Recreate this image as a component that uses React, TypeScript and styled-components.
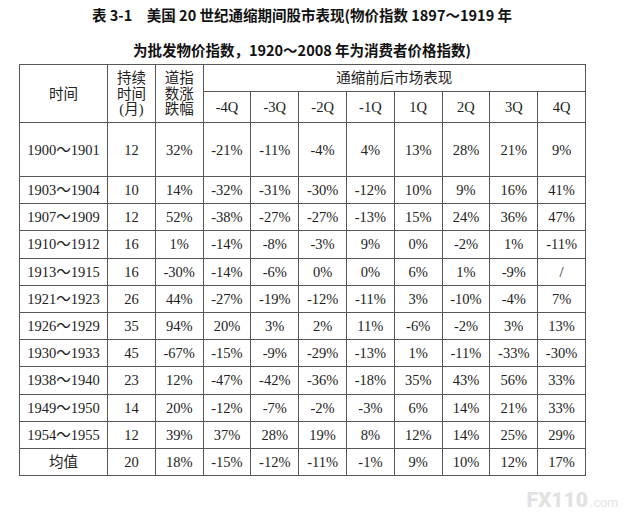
import React from 'react'
import styled, { createGlobalStyle } from 'styled-components'

const GlobalStyle = createGlobalStyle`
  html, body {
    margin: 0;
    padding: 0;
    background: #fff;
  }
`

const Page = styled.div`
  width: 631px;
  height: 524px;
  padding: 5px 0 0 19px;
  box-sizing: border-box;
  display: flex;
  flex-direction: column;
  background: #fff;
`

const Caption = styled.div`
  width: 566px;
  display: flex;
  flex-direction: column;
  align-items: center;
  gap: 15px;
  margin-bottom: 4px;
`

const TitleLine = styled.div`
  font-family: 'Noto Sans CJK SC', 'Liberation Sans', sans-serif;
  font-weight: 700;
  font-size: 14.5px;
  line-height: 20px;
  color: #111;
  white-space: pre;
`

const Table = styled.table`
  width: 566px;
  table-layout: fixed;
  border-collapse: collapse;
  font-family: 'Liberation Serif', 'Noto Sans CJK SC', serif;
  font-size: 14.5px;
  color: #222;
`

const Col = styled.col<{ $w: number }>`
  width: ${({ $w }) => $w}px;
`

const Row = styled.tr<{ $h: number }>`
  height: ${({ $h }) => $h}px;
`

const Cell = styled.td`
  border: 1px solid #575757;
  padding: 0;
  text-align: center;
  vertical-align: middle;
  line-height: 16px;
  white-space: nowrap;
`

// stacked header labels wrap onto three short lines
const HeadCell = styled(Cell).attrs({ as: 'th' })<{ $stack?: boolean }>`
  font-weight: 400;
  font-size: 14.5px;
  line-height: ${({ $stack }) => ($stack ? '15.5px' : '16px')};
  padding-top: ${({ $stack }) => ($stack ? '2px' : '0')};
`

const Footer = styled.div`
  display: flex;
  justify-content: flex-end;
  align-items: baseline;
  gap: 2px;
  width: 599px;
  margin-top: 15px;
`

const LogoMark = styled.span`
  font-family: Roboto, 'Liberation Sans', sans-serif;
  font-weight: 900;
  font-size: 21px;
  line-height: 18px;
  color: #e2e2e2;
`

const LogoTld = styled.span`
  font-family: 'Liberation Sans', sans-serif;
  font-size: 13px;
  color: #e4e4e4;
`

const quarters = ['-4Q', '-3Q', '-2Q', '-1Q', '1Q', '2Q', '3Q', '4Q']

const rows: string[][] = [
  ['1900～1901', '12', '32%', '-21%', '-11%', '-4%', '4%', '13%', '28%', '21%', '9%'],
  ['1903～1904', '10', '14%', '-32%', '-31%', '-30%', '-12%', '10%', '9%', '16%', '41%'],
  ['1907～1909', '12', '52%', '-38%', '-27%', '-27%', '-13%', '15%', '24%', '36%', '47%'],
  ['1910～1912', '16', '1%', '-14%', '-8%', '-3%', '9%', '0%', '-2%', '1%', '-11%'],
  ['1913～1915', '16', '-30%', '-14%', '-6%', '0%', '0%', '6%', '1%', '-9%', '/'],
  ['1921～1923', '26', '44%', '-27%', '-19%', '-12%', '-11%', '3%', '-10%', '-4%', '7%'],
  ['1926～1929', '35', '94%', '20%', '3%', '2%', '11%', '-6%', '-2%', '3%', '13%'],
  ['1930～1933', '45', '-67%', '-15%', '-9%', '-29%', '-13%', '1%', '-11%', '-33%', '-30%'],
  ['1938～1940', '23', '12%', '-47%', '-42%', '-36%', '-18%', '35%', '43%', '56%', '33%'],
  ['1949～1950', '14', '20%', '-12%', '-7%', '-2%', '-3%', '6%', '14%', '21%', '33%'],
  ['1954～1955', '12', '39%', '37%', '28%', '19%', '8%', '12%', '14%', '25%', '29%'],
  ['均值', '20', '18%', '-15%', '-12%', '-11%', '-1%', '9%', '10%', '12%', '17%'],
]

export default function App() {
  return (
    <>
      <GlobalStyle />
      <Page>
        <Caption>
          <TitleLine>{'表 3-1　美国 20 世纪通缩期间股市表现(物价指数 1897～1919 年'}</TitleLine>
          <TitleLine>{'为批发物价指数，1920～2008 年为消费者价格指数)'}</TitleLine>
        </Caption>
        <Table>
          <colgroup>
            <Col $w={88} />
            {Array.from({ length: 10 }).map((_, i) => (
              <Col key={i} $w={47.8} />
            ))}
          </colgroup>
          <thead>
            <Row $h={27}>
              <HeadCell rowSpan={2}>时间</HeadCell>
              <HeadCell rowSpan={2} $stack>
                持续
                <br />
                时间
                <br />
                (月)
              </HeadCell>
              <HeadCell rowSpan={2} $stack>
                道指
                <br />
                数涨
                <br />
                跌幅
              </HeadCell>
              <HeadCell colSpan={8}>通缩前后市场表现</HeadCell>
            </Row>
            <Row $h={31}>
              {quarters.map((q) => (
                <HeadCell key={q}>{q}</HeadCell>
              ))}
            </Row>
          </thead>
          <tbody>
            {rows.map((r, i) => (
              <Row key={r[0]} $h={i === 0 ? 54 : 27.2}>
                {r.map((v, j) => (
                  <Cell key={j}>{v}</Cell>
                ))}
              </Row>
            ))}
          </tbody>
        </Table>
        <Footer>
          <LogoMark>FX110</LogoMark>
          <LogoTld>.com</LogoTld>
        </Footer>
      </Page>
    </>
  )
}
